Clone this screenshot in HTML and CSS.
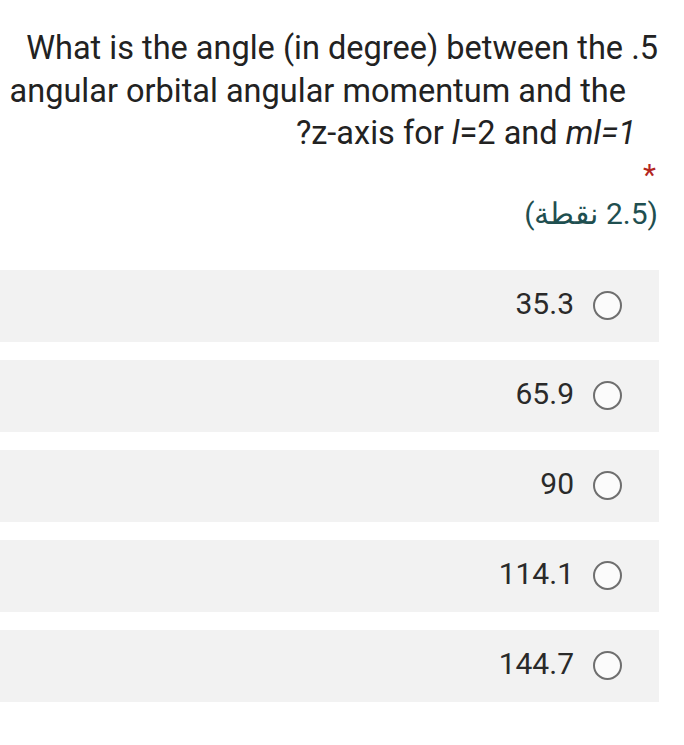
FILE: index.html
```html
<!DOCTYPE html>
<html lang="ar" dir="rtl">
<head>
<meta charset="utf-8">
<title>Question</title>
<link rel="stylesheet" href="styles.css">
</head>
<body>
<div class="question">
  <div class="title">
    <span class="line line-1">5. What is the angle (in degree) between the</span>
    <span class="line line-2">angular orbital angular momentum and the</span>
    <span class="line line-3">z-axis for <i>l</i>=2 and <i>ml=1</i>?</span>
  </div>
  <div class="required">*</div>
  <div class="points">(2.5 نقطة)</div>
</div>
<div class="options">
  <label class="option"><span class="radio"></span><span class="value">35.3</span></label>
  <label class="option"><span class="radio"></span><span class="value">65.9</span></label>
  <label class="option"><span class="radio"></span><span class="value">90</span></label>
  <label class="option"><span class="radio"></span><span class="value">114.1</span></label>
  <label class="option"><span class="radio"></span><span class="value">144.7</span></label>
</div>
</body>
</html>
```
FILE: styles.css
```css
html, body {
  margin: 0;
  padding: 0;
  background: #ffffff;
}
body {
  font-family: Roboto, "Noto Sans", "Liberation Sans", sans-serif;
  color: #222222;
  direction: rtl;
}
.question {
  padding: 27px 26px 0 0;
}
.title {
  font-size: 32.5px;
  line-height: 42.5px;
  color: #222222;
}
.line {
  display: block;
  white-space: nowrap;
}
.line-2 {
  padding-right: 32px;
}
.line-3 {
  padding-right: 22px;
}
.required {
  margin-top: 2px;
  font-size: 30px;
  line-height: 36px;
  color: #b3261e;
  padding-right: 2px;
}
.points {
  font-size: 30px;
  line-height: 42px;
  color: #1f4f50;
  padding-right: 0;
}
.options {
  margin-top: 35px;
  display: flex;
  flex-direction: column;
  gap: 18px;
  margin-right: 25px;
}
.option {
  height: 72px;
  background: #f2f2f2;
  display: flex;
  align-items: center;
  gap: 19px;
  padding-right: 37px;
}
.radio {
  width: 29px;
  height: 29px;
  box-sizing: border-box;
  border: 2px solid #6f6f6f;
  border-radius: 50%;
  background: #fbfbfb;
  flex: none;
}
.value {
  font-size: 30px;
  color: #2a2a2a;
  position: relative;
  top: -2px;
}
```
